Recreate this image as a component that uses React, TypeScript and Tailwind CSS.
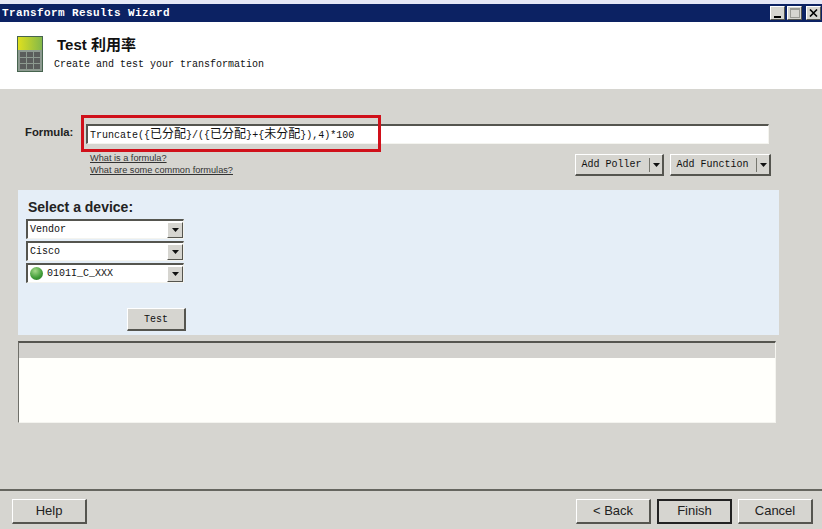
const mono = "font-['Liberation_Mono','Noto_Sans_CJK_SC',monospace] text-[10px] text-[#111]";
const sans = "font-['Liberation_Sans','Noto_Sans_CJK_SC',sans-serif]";
const raised = "border border-t-white border-l-white border-r-[#55554f] border-b-[#55554f] bg-[#d6d5d0]";
const sunken = "border border-t-[#55554f] border-l-[#55554f] border-r-[#f4f4ef] border-b-[#f4f4ef] bg-white";

const Caret = () => (
  <svg width="7" height="4" viewBox="0 0 7 4">
    <path d="M0 0h7L3.5 4z" fill="#111" />
  </svg>
);

const Calculator = () => (
  <svg width="26" height="36" viewBox="0 0 26 36">
    <defs>
      <linearGradient id="calc" x1="0" y1="0" x2="1" y2="0">
        <stop offset="0" stopColor="#dfe01e" />
        <stop offset="1" stopColor="#83b84a" />
      </linearGradient>
    </defs>
    <rect x="0.5" y="0.5" width="25" height="35" fill="#8d9a90" stroke="#47644f" />
    <rect x="1" y="1" width="24" height="13" fill="url(#calc)" />
    {[16, 22, 28].map((y) =>
      [3, 10, 17].map((x) => <rect key={`${x}-${y}`} x={x} y={y} width="6" height="5" fill="#5a5d5c" />)
    )}
  </svg>
);

const Dropdown = ({ label, icon }: { label: string; icon?: boolean }) => (
  <div className={`${sunken} flex h-[20px] w-[158px] items-center justify-between border-2 border-b border-r pl-[2px]`}>
    <div className={`${mono} flex items-center gap-[4px]`}>
      {icon && (
        <span className="h-[13px] w-[13px] rounded-full bg-[radial-gradient(circle_at_40%_30%,#a5d98a,#3d9a35_60%,#2f6e2c)]" />
      )}
      {label}
    </div>
    <div className={`${raised} flex h-[16px] w-[16px] items-center justify-center`}>
      <Caret />
    </div>
  </div>
);

const SplitButton = ({ label, width }: { label: string; width: string }) => (
  <div className={`${raised} ${width} flex h-[22px] items-center border-b-2 border-r-2`}>
    <span className={`${mono} flex-1 pr-[2px] text-center`}>{label}</span>
    <span className="h-[14px] w-px bg-[#77776f]" />
    <span className="flex w-[12px] justify-center">
      <Caret />
    </span>
  </div>
);

const WizardButton = ({ label, primary }: { label: string; primary?: boolean }) => (
  <button
    className={`${sans} flex h-[25px] w-[75px] items-center justify-center text-[13px] text-[#222] ${
      primary ? "border-2 border-[#222] bg-[#d6d5d0] pb-[1px]" : `${raised} border-b-2 border-r-2`
    }`}
  >
    {label}
  </button>
);

const Cjk = ({ children }: { children: string }) => <span className="text-[12px]">{children}</span>;

export default function App() {
  return (
    <div className="flex h-[529px] w-[822px] flex-col overflow-hidden bg-[#d6d5d0]">
      <div className="h-[4px] bg-[#e6e8f6]" />

      {/* title bar */}
      <div className="flex h-[18px] items-center justify-between bg-[#0c2263] pl-[2px] pr-[1px]">
        <span className="font-['Liberation_Mono',monospace] text-[11px] font-bold tracking-[0.4px] text-white">
          Transform Results Wizard
        </span>
        <div className="flex gap-[2px]">
          <div className={`${raised} flex h-[14px] w-[15px] items-end justify-center pb-[1px]`}>
            <span className="h-[2px] w-[7px] bg-black" />
          </div>
          <div className={`${raised} flex h-[14px] w-[15px] items-center justify-center`}>
            <span className="h-[10px] w-[10px] border border-t-2 border-[#9a9a94]" />
          </div>
          <div className={`${raised} ml-[2px] flex h-[14px] w-[15px] items-center justify-center`}>
            <svg width="9" height="8" viewBox="0 0 9 8">
              <path d="M1 0.5l7 7M8 0.5l-7 7" stroke="#000" strokeWidth="1.6" />
            </svg>
          </div>
        </div>
      </div>

      {/* header */}
      <div className="flex h-[67px] gap-[12px] bg-white pl-[17px] pt-[14px]">
        <Calculator />
        <div className="-ml-[1px]">
          <div className={`${sans} ml-[3px] text-[15px] leading-[18px] font-bold text-[#111]`}>Test 利用率</div>
          <div className={`${mono} mt-[5px] leading-[12px]`}>Create and test your transformation</div>
        </div>
      </div>

      {/* body */}
      <div className="flex flex-1 flex-col pl-[18px] pr-[52px]">
        <div className="relative mt-[35px] flex items-start">
          <span className={`${sans} ml-[7px] w-[60px] text-[11.3px] font-bold text-[#222]`}>Formula:</span>
          <div className={`${sunken} mx-[1px] flex h-[20px] flex-1 items-center border-t-2 border-l-2 pl-[2px] ${mono}`}>
            <span className="whitespace-pre">
              Truncate({"{"}
              <Cjk>已分配</Cjk>
              {"}"}/({"{"}
              <Cjk>已分配</Cjk>
              {"}"}+{"{"}
              <Cjk>未分配</Cjk>
              {"}"}),4)*100
            </span>
          </div>
          <div className="absolute top-[-9px] left-[63px] h-[37px] w-[300px] border-[3px] border-[#d0101a]" />
        </div>

        <div className="flex items-start justify-between pl-[72px] pt-[6px]">
          <div className={`${sans} flex flex-col pt-[2px] text-[9.2px] leading-[12px] text-[#333] underline`}>
            <span>What is a formula?</span>
            <span>What are some common formulas?</span>
          </div>
          <div className="-mr-[1px] flex gap-[6px] pt-[4px]">
            <SplitButton label="Add Poller" width="w-[89px]" />
            <SplitButton label="Add Function" width="w-[101px]" />
          </div>
        </div>

        <div className="mt-[14px] -mr-[9px] flex h-[145px] flex-col bg-[#e5eef7] pl-[8px] pt-[9px]">
          <div className={`${sans} ml-[2px] text-[14px] leading-[16px] font-bold text-[#222]`}>Select a device:</div>
          <div className="mt-[4px] flex flex-col gap-[2px]">
            <Dropdown label="Vendor" />
            <Dropdown label="Cisco" />
            <Dropdown label="0101I_C_XXX" icon />
          </div>
          <div className={`${raised} ${mono} mt-[25px] ml-[101px] flex h-[23px] w-[59px] items-center justify-center border-b-2 border-r-2`}>
            Test
          </div>
        </div>

        <div className="mt-[6px] -mr-[6px] flex h-[82px] flex-col border border-t-2 border-t-[#55554f] border-l-[#6f6f69] border-r-[#f4f4ef] border-b-[#f4f4ef]">
          <div className="h-[15px] bg-[#d2d1cd]" />
          <div className="flex-1 bg-[#fffffb]" />
        </div>
      </div>

      {/* footer */}
      <div className="flex h-[40px] items-start justify-between border-t-2 border-t-[#66665f] pl-[12px] pr-[9px] pt-[8px]">
        <WizardButton label="Help" />
        <div className="flex gap-[6px]">
          <WizardButton label="< Back" />
          <WizardButton label="Finish" primary />
          <WizardButton label="Cancel" />
        </div>
      </div>
    </div>
  );
}
